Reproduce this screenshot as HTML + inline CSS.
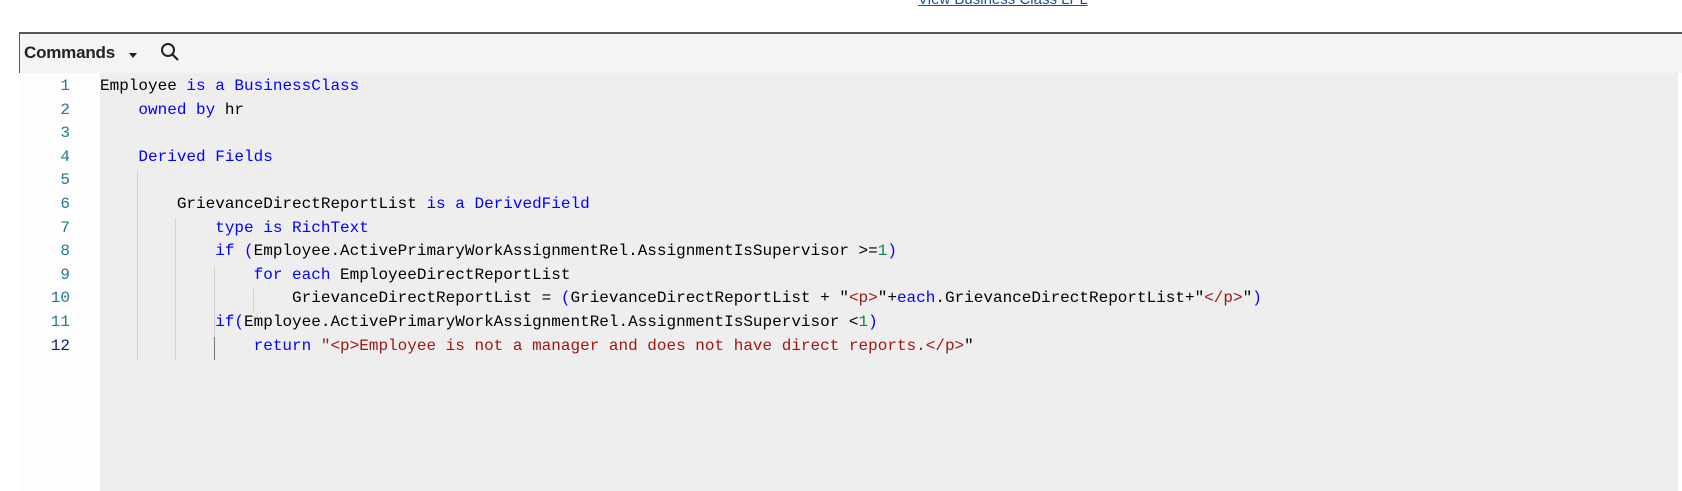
<!DOCTYPE html>
<html><head><style>
html,body{margin:0;padding:0;background:#fff;width:1682px;height:491px;overflow:hidden;position:relative}
.link{position:absolute;left:918px;top:-9px;font:15px "Liberation Sans",sans-serif;color:#1a4f9c;text-decoration:underline}
.tb{position:absolute;left:19px;top:32px;width:1663px;height:41px;background:#f4f4f4;border-top:2px solid #555;border-left:1px solid #555;box-sizing:border-box}
.cmd{position:absolute;left:4px;top:9px;font:bold 17px "Liberation Sans",sans-serif;color:#222;letter-spacing:-0.2px}
.car{position:absolute;left:109px;top:19px;width:0;height:0;border-left:4px solid transparent;border-right:4px solid transparent;border-top:5px solid #222}
.gut{position:absolute;left:20px;top:73px;width:80px;height:418px;background:#fdfdfd}
.ed{position:absolute;left:100px;top:73px;width:1578px;height:418px;background:#eeeeee}
.ln{position:absolute;left:20px;width:50px;text-align:right;font:16px "Liberation Mono",monospace;color:#237893}
.cl{position:absolute;left:100px;font:16px "Liberation Mono",monospace;color:#000;white-space:pre}
.k{color:#0000ff}.n{color:#098658}.s{color:#a31515}
.g{position:absolute;width:1px;background:#d3d3d3}
</style></head><body>
<div class="link">View Business Class LPL</div>
<div class="tb"><div class="cmd">Commands</div><div class="car"></div>
<svg style="position:absolute;left:140px;top:8px" width="20" height="20" viewBox="0 0 20 20"><circle cx="8" cy="8" r="6" fill="none" stroke="#222" stroke-width="2"/><line x1="12.5" y1="12.5" x2="18" y2="18" stroke="#222" stroke-width="2.2"/></svg></div>
<div class="gut"></div><div class="ed"></div>
<div class="g" style="left:137px;top:171px;height:189px"></div>
<div class="g" style="left:175px;top:218px;height:142px"></div>
<div class="g" style="left:214px;top:266px;height:71px"></div>
<div class="g" style="left:253px;top:289px;height:24px"></div>
<div class="g" style="left:214px;top:337px;height:23px;background:#777"></div>
<div style="position:absolute;top:77px;left:0;line-height:23.6px">
<div class="ln" style="top:0">1</div><div class="ln" style="top:23.6px">2</div><div class="ln" style="top:47.2px">3</div><div class="ln" style="top:70.8px">4</div><div class="ln" style="top:94.4px">5</div><div class="ln" style="top:118px">6</div><div class="ln" style="top:141.6px">7</div><div class="ln" style="top:165.2px">8</div><div class="ln" style="top:188.8px">9</div><div class="ln" style="top:212.4px">10</div><div class="ln" style="top:236px">11</div><div class="ln" style="top:259.6px;color:#0b216f">12</div>
<div class="cl" style="top:0">Employee <span class="k">is a BusinessClass</span></div>
<div class="cl" style="top:23.6px">    <span class="k">owned by</span> hr</div>
<div class="cl" style="top:70.8px">    <span class="k">Derived Fields</span></div>
<div class="cl" style="top:118px">        GrievanceDirectReportList <span class="k">is a DerivedField</span></div>
<div class="cl" style="top:141.6px">            <span class="k">type is RichText</span></div>
<div class="cl" style="top:165.2px">            <span class="k">if (</span>Employee.ActivePrimaryWorkAssignmentRel.AssignmentIsSupervisor &gt;=<span class="n">1</span><span class="k">)</span></div>
<div class="cl" style="top:188.8px">                <span class="k">for each</span> EmployeeDirectReportList</div>
<div class="cl" style="top:212.4px">                    GrievanceDirectReportList = <span class="k">(</span>GrievanceDirectReportList + "<span class="s">&lt;p&gt;</span>"+<span class="k">each</span>.GrievanceDirectReportList+"<span class="s">&lt;/p&gt;</span>"<span class="k">)</span></div>
<div class="cl" style="top:236px">            <span class="k">if(</span>Employee.ActivePrimaryWorkAssignmentRel.AssignmentIsSupervisor &lt;<span class="n">1</span><span class="k">)</span></div>
<div class="cl" style="top:259.6px">                <span class="k">return</span> <span class="s">"&lt;p&gt;Employee is not a manager and does not have direct reports.&lt;/p&gt;</span>"</div>
</div>
</body></html>
